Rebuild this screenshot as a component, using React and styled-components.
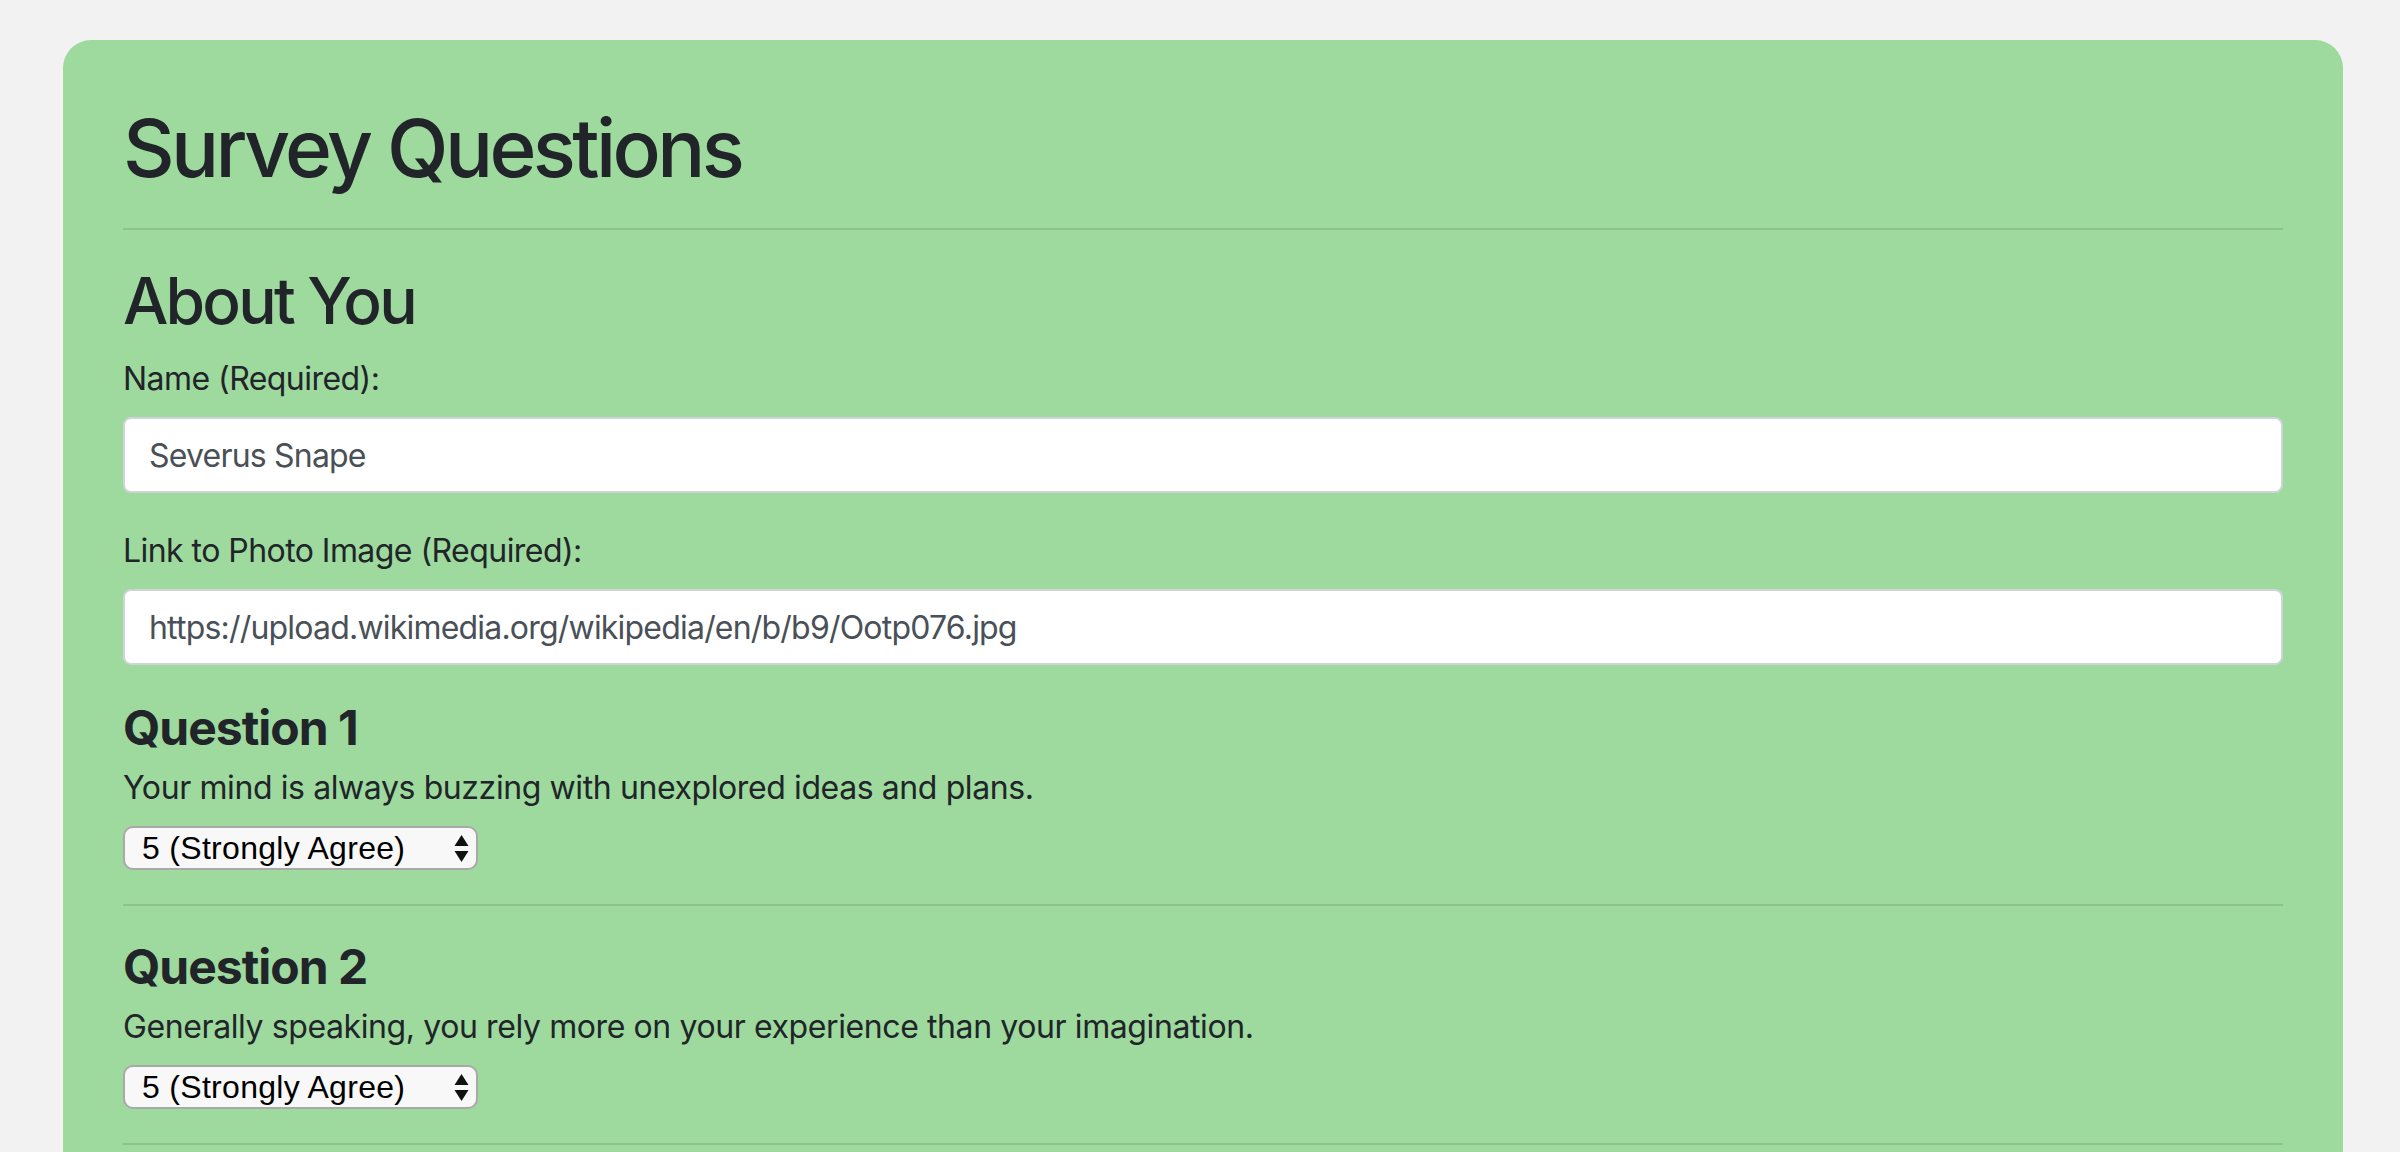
import React from "react";
import styled, { createGlobalStyle } from "styled-components";

const GlobalStyle = createGlobalStyle`
  html, body {
    margin: 0;
    padding: 0;
    background: #f2f2f2;
    font-family: "Inter", "Noto Sans", sans-serif;
    color: #212529;
  }
`;

const Page = styled.div`
  padding: 40px 57px 0 63px;
`;

const Panel = styled.div`
  background: #9ed99e;
  border-radius: 28px;
  padding: 60px 60px 40px;
  min-height: 1200px;
`;

const Title = styled.h1`
  margin: 0 0 32px;
  font-size: 80px;
  line-height: 96px;
  font-weight: 500;
  letter-spacing: -3.6px;
`;

const Rule = styled.hr`
  margin: ${(p) => p.$top || 32}px 0 32px;
  border: 0;
  border-top: 2px solid rgba(0, 0, 0, 0.1);
`;

const SectionTitle = styled.h2`
  margin: 0 0 16px;
  font-size: 64px;
  line-height: 77px;
  font-weight: 500;
  letter-spacing: -2.8px;
`;

const Field = styled.div`
  margin-bottom: 34px;
`;

const Label = styled.label`
  display: block;
  margin-bottom: 14px;
  font-size: 32px;
  line-height: 48px;
  letter-spacing: -0.55px;
`;

const TextInput = styled.input`
  display: block;
  box-sizing: border-box;
  width: 100%;
  height: 76px;
  padding: 0 24px;
  border: 2px solid #ced4da;
  border-radius: 8px;
  background: #fff;
  color: #495057;
  font-family: inherit;
  font-size: 32px;
  letter-spacing: -0.8px;
  outline: none;
`;

const QuestionTitle = styled.h4`
  margin: 0 0 8px;
  font-size: 48px;
  line-height: 57px;
  font-weight: 700;
  letter-spacing: -1px;
`;

const QuestionText = styled.p`
  margin: 0 0 14px;
  font-size: 32px;
  line-height: 48px;
  letter-spacing: -0.4px;
`;

const SelectWrap = styled.div`
  position: relative;
  display: inline-block;
  vertical-align: top;
`;

const Select = styled.select`
  appearance: none;
  -webkit-appearance: none;
  display: block;
  box-sizing: border-box;
  width: 355px;
  height: 44px;
  margin: 0;
  padding: 0 40px 0 17px;
  border: 2px solid #a9a9a9;
  border-radius: 10px;
  background: #f8f8f8;
  color: #000;
  font-family: "Liberation Sans", Arial, sans-serif;
  font-size: 32px;
  letter-spacing: 0.3px;
  outline: none;
`;

const Arrows = styled.svg`
  position: absolute;
  right: 9px;
  top: 9px;
  pointer-events: none;
`;

const options = [
  "1 (Strongly Disagree)",
  "2 (Disagree)",
  "3 (Neutral)",
  "4 (Agree)",
  "5 (Strongly Agree)",
];

const questions = [
  "Your mind is always buzzing with unexplored ideas and plans.",
  "Generally speaking, you rely more on your experience than your imagination.",
];

function Question({ number, text }) {
  return (
    <div>
      <QuestionTitle>Question {number}</QuestionTitle>
      <QuestionText>{text}</QuestionText>
      <SelectWrap>
        <Select defaultValue={options[4]}>
          {options.map((o) => (
            <option key={o}>{o}</option>
          ))}
        </Select>
        <Arrows width="15" height="27" viewBox="0 0 15 27">
          <path d="M7.5 0 L14.5 11 L0.5 11 Z" fill="#111" />
          <path d="M7.5 27 L14.5 16 L0.5 16 Z" fill="#111" />
        </Arrows>
      </SelectWrap>
      <Rule $top={34} />
    </div>
  );
}

export default function App() {
  return (
    <>
      <GlobalStyle />
      <Page>
        <Panel>
          <Title>Survey Questions</Title>
          <Rule />
          <SectionTitle>About You</SectionTitle>
          <Field>
            <Label>Name (Required):</Label>
            <TextInput defaultValue="Severus Snape" />
          </Field>
          <Field>
            <Label>Link to Photo Image (Required):</Label>
            <TextInput defaultValue="https://upload.wikimedia.org/wikipedia/en/b/b9/Ootp076.jpg" />
          </Field>
          {questions.map((q, i) => (
            <Question key={i} number={i + 1} text={q} />
          ))}
        </Panel>
      </Page>
    </>
  );
}
